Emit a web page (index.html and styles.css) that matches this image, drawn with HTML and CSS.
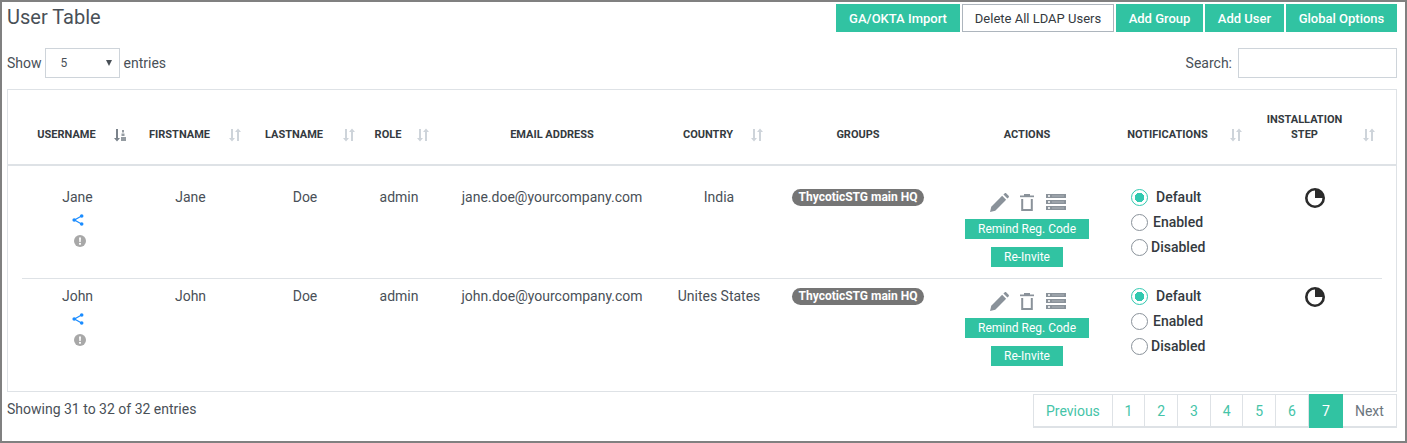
FILE: index.html
```html
<!DOCTYPE html>
<html lang="en">
<head>
    <meta charset="UTF-8">
    <title>User Table</title>
    <link rel="stylesheet" href="styles.css">
</head>
<body>
    <svg class="sprites" width="0" height="0">
        <symbol id="sort" viewBox="0 0 12 14">
            <path d="M2 1h2v9h2L3 13.500 0 10h2z M8 13V4H6l3-3.500L12 4h-2v9z" fill="currentColor"/>
        </symbol>
        <symbol id="sort-active" viewBox="0 0 12 14">
            <path d="M2 1h2v9h2L3 13.500 0 10h2z" fill="currentColor"/>
            <path d="M8 2h2v2.500H8zM7.500 5.500h3V8h-3zM7 9h5v4H7z" fill="currentColor" opacity=".8"/>
        </symbol>
        <symbol id="share" viewBox="0 0 12 12">
            <path d="M9.500 2L2.500 6l7 4" fill="none" stroke="currentColor" stroke-width="1.200"/>
            <circle cx="9.700" cy="2" r="1.800" fill="currentColor"/>
            <circle cx="2.200" cy="6" r="1.800" fill="currentColor"/>
            <circle cx="9.700" cy="10" r="1.800" fill="currentColor"/>
        </symbol>
        <symbol id="alert" viewBox="0 0 12 12">
            <circle cx="6" cy="6" r="6" fill="currentColor"/>
            <path d="M5 2.400h2L6.700 7H5.300z" fill="#fff"/>
            <circle cx="6" cy="8.800" r="1.100" fill="#fff"/>
        </symbol>
        <symbol id="pencil" viewBox="0 0 18 18">
            <path d="M0 18l1.200-5L11.500 2.700l3.800 3.800L5 16.800z" fill="currentColor"/>
            <path d="M12.700 1.500L13.800.4c.5-.5 1.200-.5 1.700 0l2.100 2.100c.5.500.5 1.200 0 1.700l-1.100 1.100z" fill="currentColor"/>
        </symbol>
        <symbol id="trash" viewBox="0 0 14 17">
            <path d="M0 1.500h14v1.700H0z" fill="currentColor"/>
            <path d="M4 0h6v2H4z" fill="currentColor"/>
            <path d="M2.200 5v11h9.600V5" fill="none" stroke="currentColor" stroke-width="2"/>
        </symbol>
        <symbol id="list" viewBox="0 0 20 16">
            <path d="M0 0h20v4H0zM0 6h20v4H0zM0 12h20v4H0z" fill="currentColor"/>
            <path d="M2 1.300h2v1.400H2zM2 7.300h2v1.400H2zM2 13.300h2v1.400H2z" fill="#fff"/>
            <path d="M6 1.500h12v1H6zM6 7.500h12v1H6zM6 13.500h12v1H6z" fill="#fff" opacity=".3"/>
        </symbol>
        <symbol id="step" viewBox="0 0 20 20">
            <circle cx="10" cy="10" r="8.700" fill="none" stroke="currentColor" stroke-width="2.600"/>
            <path d="M10 10V1.500a8.500 8.500 0 0 1 8.500 8.500z" fill="currentColor"/>
        </symbol>
    </svg>

    <div class="page">
        <div class="title-bar">
            <h1>User Table</h1>
            <div class="toolbar">
                <button class="btn w-import">GA/OKTA Import</button>
                <button class="btn btn-outline w-ldap">Delete All LDAP Users</button>
                <button class="btn w-group">Add Group</button>
                <button class="btn w-user">Add User</button>
                <button class="btn w-options">Global Options</button>
            </div>
        </div>

        <div class="filters">
            <label class="length">Show
                <span class="fake-select">5<i class="caret"></i></span>
                entries</label>
            <label class="search">Search: <span class="fake-input"></span></label>
        </div>

        <div class="table-box">
            <div class="grid head">
                <div class="th sortable"><span>USERNAME</span><svg class="sort-icon dark"><use href="#sort-active"/></svg></div>
                <div class="th sortable"><span>FIRSTNAME</span><svg class="sort-icon"><use href="#sort"/></svg></div>
                <div class="th sortable"><span>LASTNAME</span><svg class="sort-icon"><use href="#sort"/></svg></div>
                <div class="th sortable"><span>ROLE</span><svg class="sort-icon"><use href="#sort"/></svg></div>
                <div class="th"><span>EMAIL ADDRESS</span></div>
                <div class="th sortable"><span>COUNTRY</span><svg class="sort-icon"><use href="#sort"/></svg></div>
                <div class="th"><span>GROUPS</span></div>
                <div class="th"><span>ACTIONS</span></div>
                <div class="th sortable"><span>NOTIFICATIONS</span><svg class="sort-icon"><use href="#sort"/></svg></div>
                <div class="th sortable"><span>INSTALLATION<br>STEP</span><svg class="sort-icon"><use href="#sort"/></svg></div>
            </div>

            <div class="grid row">
                <div class="td">Jane
                    <svg class="ico-share"><use href="#share"/></svg>
                    <svg class="ico-alert"><use href="#alert"/></svg>
                </div>
                <div class="td">Jane</div>
                <div class="td">Doe</div>
                <div class="td">admin</div>
                <div class="td">jane.doe@yourcompany.com</div>
                <div class="td">India</div>
                <div class="td"><span class="pill">ThycoticSTG main HQ</span></div>
                <div class="td actions">
                    <div class="action-icons">
                        <svg class="ico-pencil"><use href="#pencil"/></svg>
                        <svg class="ico-trash"><use href="#trash"/></svg>
                        <svg class="ico-list"><use href="#list"/></svg>
                    </div>
                    <button class="btn-small">Remind Reg. Code</button>
                    <button class="btn-small">Re-Invite</button>
                </div>
                <div class="td notify">
                    <label class="radio"><i class="dot on"></i><span class="gap-a">Default</span></label>
                    <label class="radio"><i class="dot"></i><span class="gap-b">Enabled</span></label>
                    <label class="radio"><i class="dot"></i><span>Disabled</span></label>
                </div>
                <div class="td"><svg class="ico-step"><use href="#step"/></svg></div>
            </div>

            <div class="grid row last">
                <div class="td">John
                    <svg class="ico-share"><use href="#share"/></svg>
                    <svg class="ico-alert"><use href="#alert"/></svg>
                </div>
                <div class="td">John</div>
                <div class="td">Doe</div>
                <div class="td">admin</div>
                <div class="td">john.doe@yourcompany.com</div>
                <div class="td">Unites States</div>
                <div class="td"><span class="pill">ThycoticSTG main HQ</span></div>
                <div class="td actions">
                    <div class="action-icons">
                        <svg class="ico-pencil"><use href="#pencil"/></svg>
                        <svg class="ico-trash"><use href="#trash"/></svg>
                        <svg class="ico-list"><use href="#list"/></svg>
                    </div>
                    <button class="btn-small">Remind Reg. Code</button>
                    <button class="btn-small">Re-Invite</button>
                </div>
                <div class="td notify">
                    <label class="radio"><i class="dot on"></i><span class="gap-a">Default</span></label>
                    <label class="radio"><i class="dot"></i><span class="gap-b">Enabled</span></label>
                    <label class="radio"><i class="dot"></i><span>Disabled</span></label>
                </div>
                <div class="td"><svg class="ico-step"><use href="#step"/></svg></div>
            </div>
        </div>

        <div class="footer">
            <div class="info">Showing 31 to 32 of 32 entries</div>
            <div class="pager">
                <a class="p-prev">Previous</a>
                <a class="p-num">1</a>
                <a class="p-num">2</a>
                <a class="p-num">3</a>
                <a class="p-num">4</a>
                <a class="p-num">5</a>
                <a class="p-num">6</a>
                <a class="p-num current">7</a>
                <a class="p-next">Next</a>
            </div>
        </div>
    </div>
</body>
</html>
```

FILE: styles.css
```css
:root {
    --teal: #31c3a2;
    --text: #343a40;
    --line: #dee2e6;
    --icon: #8a929a;
}

html, body {
    margin: 0;
    height: 100%;
    background: #fff;
}

body {
    font-family: Roboto, "Liberation Sans", sans-serif;
    font-size: 14px;
    color: var(--text);
}

.sprites {
    display: block;
    height: 0;
}

/* outer frame of the screenshot */
.page {
    box-sizing: border-box;
    width: 1407px;
    height: 443px;
    border: 2px solid #808080;
    padding: 2px 8px 0 5px;
}

/* title + buttons */
.title-bar {
    display: flex;
    justify-content: space-between;
    height: 32px;
}

h1 {
    margin: 1px 0 0;
    font-size: 20px;
    font-weight: 400;
    line-height: 24px;
    color: #495057;
}

.toolbar {
    display: flex;
    gap: 2px;
    align-items: flex-start;
}

.btn {
    box-sizing: border-box;
    height: 28px;
    padding: 0;
    border: 0;
    background: var(--teal);
    color: #fff;
    font: 500 13px Roboto, sans-serif;
}

.btn-outline {
    background: #fff;
    color: #343a40;
    border: 1px solid #adb5bd;
    font-weight: 400;
}

.w-import { width: 124px; }
.w-ldap { width: 152px; }
.w-group { width: 87px; }
.w-user { width: 79px; }
.w-options { width: 111px; }

/* show entries + search */
.filters {
    display: flex;
    justify-content: space-between;
    margin-top: 12px;
    height: 30px;
    color: #495057;
}

.length, .search {
    display: flex;
    align-items: center;
    gap: 3px;
}

.search { gap: 6px; }

.fake-select {
    box-sizing: border-box;
    display: flex;
    align-items: center;
    justify-content: space-between;
    width: 75px;
    height: 30px;
    margin-right: 1px;
    padding: 0 7px 0 15px;
    border: 1px solid #ced4da;
    font-size: 12px;
}

.caret {
    width: 0;
    height: 0;
    border-left: 3px solid transparent;
    border-right: 3px solid transparent;
    border-top: 6px solid #495057;
}

.fake-input {
    box-sizing: border-box;
    width: 159px;
    height: 30px;
    border: 1px solid #ced4da;
}

/* table */
.table-box {
    box-sizing: border-box;
    height: 303px;
    margin-top: 11px;
    border: 1px solid var(--line);
}

.grid {
    display: grid;
    grid-template-columns: 111px 115px 114px 74px 232px 102px 176px 162px 141px 133px;
}

.head {
    height: 76px;
    box-sizing: border-box;
    padding: 0 14px 22px;
    border-bottom: 2px solid var(--line);
}

.th {
    display: flex;
    align-items: flex-end;
    justify-content: center;
    font-size: 11px;
    font-weight: 700;
    line-height: 15px;
    text-align: center;
    color: #343a40;
}

.sortable {
    display: grid;
    grid-template-columns: 1fr 18px;
    padding-right: 4px;
}

.sort-icon {
    width: 12px;
    height: 14px;
    margin-left: 3px;
    color: #ced4da;
}

.sort-icon.dark { color: #7b838b; }

.row {
    box-sizing: border-box;
    height: 113px;
    margin: 0 14px;
    padding-top: 23px;
    border-bottom: 1px solid var(--line);
}

.row.last {
    height: 111px;
    padding-top: 9px;
    border-bottom: 0;
}

.td {
    display: flex;
    flex-direction: column;
    align-items: center;
    line-height: 17px;
    color: #495057;
}

.ico-share {
    width: 12px;
    height: 12px;
    margin-top: 8px;
    color: #1a8cff;
}

.ico-alert {
    width: 12px;
    height: 12px;
    margin-top: 9px;
    margin-left: 5px;
    color: #a8a8a8;
}

.pill {
    padding: 1px 7px;
    border-radius: 10px;
    background: #757575;
    color: #fff;
    font-size: 12px;
    font-weight: 700;
    line-height: 15px;
}

.actions { padding-top: 2px; }

.action-icons {
    display: flex;
    align-items: center;
    height: 22px;
    margin: 0 0 6px 2px;
    color: var(--icon);
}

.ico-pencil { width: 19px; height: 19px; }
.ico-trash { width: 14px; height: 17px; margin: 0 12px 0 11px; }
.ico-list { width: 20px; height: 16px; }

.btn-small {
    box-sizing: content-box;
    height: 20px;
    padding: 0 13px;
    border: 0;
    background: var(--teal);
    color: #fff;
    font: 400 12px Roboto, sans-serif;
}

.btn-small + .btn-small { margin-top: 8px; }

.notify {
    align-items: flex-start;
    padding-left: 23px;
}

.radio {
    display: flex;
    align-items: center;
    height: 25px;
    margin-top: -4px;
    font-weight: 500;
    color: #343a40;
}

.radio + .radio { margin-top: 0; }

.dot {
    box-sizing: border-box;
    width: 17px;
    height: 17px;
    margin-right: 3px;
    border: 1.5px solid var(--icon);
    border-radius: 50%;
}

.dot.on {
    border-color: #31c9b0;
    background: radial-gradient(circle, #31c9b0 0 4.5px, #fff 5px);
}

.gap-a { margin-left: 5px; }
.gap-b { margin-left: 2px; }

.ico-step {
    width: 20px;
    height: 20px;
    margin: -1px 1px 0 0;
    color: #2b2b2b;
}

/* footer */
.footer {
    display: flex;
    justify-content: space-between;
    margin-top: 2px;
}

.info {
    margin-top: 7px;
    color: #495057;
}

.pager {
    display: flex;
    height: 34px;
    box-sizing: border-box;
    border: 1px solid var(--line);
    border-bottom-width: 2px;
    color: #45c4a8;
}

.pager a {
    box-sizing: border-box;
    display: flex;
    align-items: center;
    justify-content: center;
    border-right: 1px solid var(--line);
}

.p-prev { width: 78.6px; }
.p-num { width: 32.7px; }
.pager .p-next { width: 53.2px; color: #6c757d; border-right: 0; }

.pager .current {
    width: 34px;
    margin: -1px 0 -2px;
    border-right: 0;
    background: var(--teal);
    color: #fff;
}
```
